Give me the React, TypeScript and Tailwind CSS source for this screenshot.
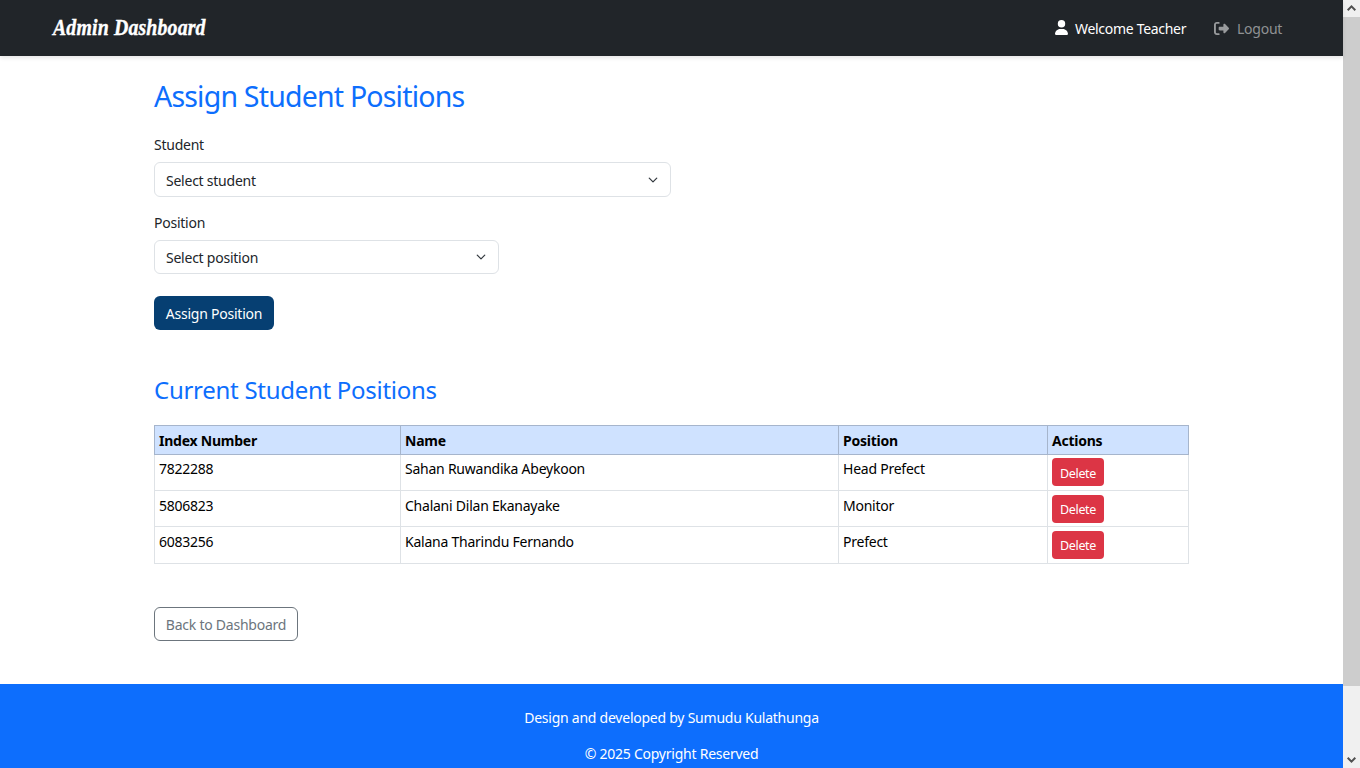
import type { ReactNode } from "react";

const rows = [
  { index: "7822288", name: "Sahan Ruwandika Abeykoon", position: "Head Prefect", height: "h-9", pad: "pt-[3px]", text: "pt-1", label: "pt-[3px]" },
  { index: "5806823", name: "Chalani Dilan Ekanayake", position: "Monitor", height: "h-9", pad: "pt-1", text: "pt-[5px]", label: "pt-0.5" },
  { index: "6083256", name: "Kalana Tharindu Fernando", position: "Prefect", height: "h-[37px]", pad: "pt-1", text: "pt-[5px]", label: "pt-0.5" },
];

function Chevron() {
  return (
    <svg className="h-[10px] w-[10px]" viewBox="0 0 16 16" fill="none" stroke="#343a40" strokeWidth="2" strokeLinecap="round" strokeLinejoin="round">
      <path d="m2 5 6 6 6-6" />
    </svg>
  );
}

function Select({ children, className }: { children: ReactNode; className: string }) {
  return (
    <div className={`flex justify-between rounded-md border border-[#dee2e6] pr-3 pl-[11px] text-[#212529] ${className}`}>
      <span>{children}</span>
      <Chevron />
    </div>
  );
}

function Scrollbar() {
  return (
    <div className="flex h-full w-[17px] shrink-0 flex-col bg-[#f0f0f0]">
      <svg className="h-[17px] w-[17px] shrink-0" viewBox="0 0 17 17" fill="none" stroke="#505050" strokeWidth="2">
        <path d="m4.7 10.2 3.8-3.8 3.8 3.8" />
      </svg>
      <div className="h-[669px] bg-[#cdcdcd]" />
      <div className="grow" />
      <svg className="h-[17px] w-[17px] shrink-0" viewBox="0 0 17 17" fill="none" stroke="#505050" strokeWidth="2">
        <path d="m4.7 6.8 3.8 3.8 3.8-3.8" />
      </svg>
    </div>
  );
}

export default function App() {
  return (
    <div className="flex h-screen overflow-hidden bg-white font-['Noto_Sans',sans-serif] text-[14px] leading-5 tracking-[-0.24px] text-[#212529]">
      <div className="flex min-w-0 grow flex-col">
        <header className="z-10 flex h-14 shrink-0 items-center justify-between bg-[#212529] pr-[61px] pl-[53px] shadow-[0_2px_4px_rgba(0,0,0,0.1)]">
          <span className="inline-block origin-left scale-x-[0.86] font-['Liberation_Serif',serif] text-[23px] leading-7 font-bold tracking-[0.2px] whitespace-nowrap text-white italic [-webkit-text-stroke:0.4px_white]">Admin Dashboard</span>
          <nav className="flex items-center whitespace-nowrap">
            <svg className="mr-[7px] mb-0.5 h-[15px] w-[13px]" viewBox="0 0 448 512" fill="#fff">
              <path d="M224 256A128 128 0 1 0 224 0a128 128 0 1 0 0 256zm-45.700 48C79.800 304 0 383.800 0 482.300C0 498.700 13.300 512 29.700 512H418.300c16.400 0 29.700-13.300 29.700-29.700C448 383.800 368.200 304 269.700 304H178.300z" />
            </svg>
            <span className="w-[111px] pt-0.5 tracking-[-0.3px] text-white">Welcome Teacher</span>
            <svg className="mr-2 ml-7 h-[15px] w-[15px]" viewBox="0 0 512 512" fill="#999b9d">
              <path d="M377.900 105.900L500.700 228.700c7.200 7.200 11.300 17.100 11.300 27.300s-4.100 20.100-11.300 27.300L377.900 406.100c-6.400 6.400-15 9.900-24 9.900c-18.700 0-33.900-15.200-33.900-33.900V320H192c-17.700 0-32-14.300-32-32V224c0-17.700 14.300-32 32-32H320V129.900c0-18.700 15.200-33.900 33.900-33.900c9 0 17.600 3.600 24 9.900zM160 96H96c-17.700 0-32 14.300-32 32V384c0 17.700 14.300 32 32 32h64c17.700 0 32 14.300 32 32s-14.300 32-32 32H96c-53 0-96-43-96-96V128C0 75 43 32 96 32h64c17.700 0 32 14.300 32 32s-14.300 32-32 32z" />
            </svg>
            <span className="w-[45px] pt-0.5 text-[#909294]">Logout</span>
          </nav>
        </header>

        <main className="flex h-[628px] shrink-0 flex-col items-start pr-[154px] pl-[154px]">
          <h1 className="mt-[22px] h-9 text-[28.5px] leading-9 tracking-[-0.8px] whitespace-nowrap text-[#0d6efd]">Assign Student Positions</h1>
          <label className="mt-[21px] h-5">Student</label>
          <Select className="mt-[7px] h-[35px] w-[517px] pt-2 [&>svg]:mt-1">Select student</Select>
          <label className="mt-4 h-5">Position</label>
          <Select className="mt-[7px] h-[34px] w-[345px] pt-[7px] [&>svg]:mt-1">Select position</Select>
          <button className="mt-[22px] h-[34px] w-[120px] rounded-md bg-[#063f72] pt-0.5 whitespace-nowrap text-white">Assign Position</button>
          <h2 className="mt-[42px] h-9 text-[24px] leading-9 tracking-[-0.28px] whitespace-nowrap text-[#0d6efd]">Current Student Positions</h2>

          <div className="mt-[17px] w-[1035px] text-black">
            <div className="grid h-[30px] grid-cols-[246px_438px_209px_142px] border-y border-[#a6b5cc] bg-[#cfe2ff] font-bold *:border-l *:border-[#a6b5cc] *:pt-[5px] *:pl-1">
              <div>Index Number</div>
              <div>Name</div>
              <div>Position</div>
              <div className="border-r">Actions</div>
            </div>
            {rows.map((r) => (
              <div key={r.index} className={`grid grid-cols-[246px_438px_209px_142px] border-b border-[#dee2e6] *:border-l *:border-[#dee2e6] *:pl-1 ${r.height}`}>
                <div className={r.text}>{r.index}</div>
                <div className={r.text}>{r.name}</div>
                <div className={r.text}>{r.position}</div>
                <div className={`border-r ${r.pad}`}>
                  <button className={`flex h-7 w-[52px] justify-center rounded-[4px] bg-[#dc3545] text-[12.5px] leading-[25px] tracking-[-0.35px] text-white ${r.label}`}>Delete</button>
                </div>
              </div>
            ))}
          </div>

          <button className="mt-[43px] h-[34px] w-[144px] rounded-md border border-[#6c757d] pt-0.5 whitespace-nowrap text-[#6c757d]">Back to Dashboard</button>
        </main>

        <footer className="flex grow flex-col items-center gap-4 bg-[#0d6efd] pt-6 text-white">
          <p>Design and developed by Sumudu Kulathunga</p>
          <p>© 2025 Copyright Reserved</p>
        </footer>
      </div>
      <Scrollbar />
    </div>
  );
}
